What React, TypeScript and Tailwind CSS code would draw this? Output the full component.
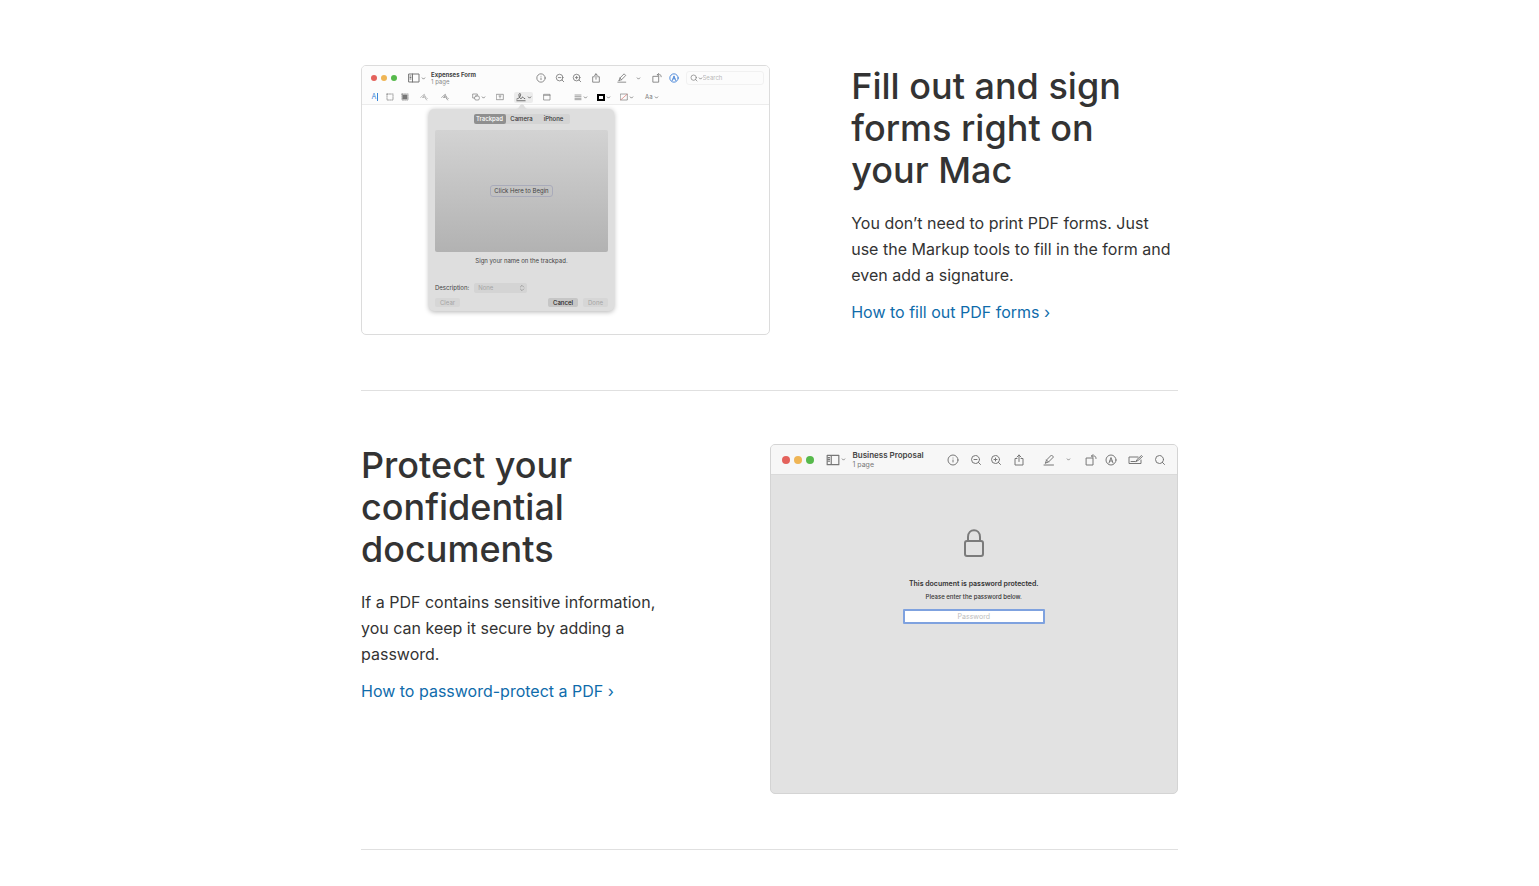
import React from 'react';
import { ChevronDown, ChevronsUpDown, Search, ZoomIn, ZoomOut, Info } from 'lucide-react';

interface IconProps {
  className?: string;
}

interface GlyphProps extends IconProps {
  children: React.ReactNode;
  viewBox?: string;
}

const Glyph: React.FC<GlyphProps> = ({ className, children, viewBox = '0 0 24 24' }) => (
  <svg
    viewBox={viewBox}
    fill="none"
    stroke="currentColor"
    strokeWidth="2"
    strokeLinecap="round"
    strokeLinejoin="round"
    className={className}
    aria-hidden="true"
  >
    {children}
  </svg>
);

const SidebarIcon: React.FC<IconProps> = ({ className }) => (
  <Glyph className={className}>
    <path d="M2 4h20v16H2zM9 4v16M4 8h2M4 11h2M4 14h2" />
  </Glyph>
);

const ShareIcon: React.FC<IconProps> = ({ className }) => (
  <Glyph className={className}>
    <path d="M8 9H4v13h16V9h-4M12 15V2M8 6l4-4 4 4" />
  </Glyph>
);

const PenIcon: React.FC<IconProps> = ({ className }) => (
  <Glyph className={className}>
    <path d="M5 18l2-6L17 2l4 4-10 10-6 2zM7 12l4 4M2 22h19" />
  </Glyph>
);

const RotateIcon: React.FC<IconProps> = ({ className }) => (
  <Glyph className={className}>
    <path d="M3 8h13v14H3zM13 4h5c3 0 4 2 4 5M16 1l-3 3 3 3" />
  </Glyph>
);

const MarkupIcon: React.FC<IconProps> = ({ className }) => (
  <Glyph className={className}>
    <circle cx="12" cy="12" r="10" />
    <path d="M8 18l4-11 4 11M10 14h4" />
  </Glyph>
);

const FormIcon: React.FC<IconProps> = ({ className }) => (
  <Glyph className={className} viewBox="0 0 30 20">
    <path d="M20 4H2v13h24v-7M6 13h8M16 13l2-4 9-8 2 2-9 8-4 2z" />
  </Glyph>
);

const SignatureIcon: React.FC<IconProps> = ({ className }) => (
  <Glyph className={className}>
    <path d="M2 17c5-1 9-6 9-11 0-4-4-3-4 1 0 5 3 9 5 9s2-4 4-4 1 4 5 4M2 21h20" />
  </Glyph>
);

const SketchIcon: React.FC<IconProps> = ({ className }) => (
  <Glyph className={className}>
    <path d="M2 13C7 9 11 5 13 4c2 0-3 7-5 11 4-5 7-7 8-6s-3 6-1 6M15 14l5 7M19 14l3 3" />
  </Glyph>
);

const Lights: React.FC<{ small?: boolean }> = ({ small }) => {
  const dot = small ? 'size-[6px] rounded-full' : 'size-2 rounded-full';
  return (
    <div className="flex gap-1">
      <span className={`${dot} bg-[#e4625c]`} />
      <span className={`${dot} bg-[#efb555]`} />
      <span className={`${dot} bg-[#56b94b]`} />
    </div>
  );
};

interface ToolProps {
  label: string;
  className?: string;
  children: React.ReactNode;
}

const Tool: React.FC<ToolProps> = ({ label, className = '', children }) => (
  <button type="button" aria-label={label} className={`flex shrink-0 items-center justify-center gap-px ${className}`}>
    {children}
  </button>
);

const Chevron: React.FC = () => <ChevronDown className="size-[5px] shrink-0" strokeWidth={4} />;

const FormWindow: React.FC = () => (
  <div className="overflow-hidden rounded-[5px] border border-[#dcdcdc] bg-white text-[#777]">
    <div className="flex h-6 items-center bg-[#fcfcfc] pr-[5px] pl-[9px]">
      <Lights small />
      <Tool label="Sidebar" className="ml-[11px]">
        <SidebarIcon className="size-3" />
        <Chevron />
      </Tool>
      <div className="ml-[5px] text-[6px] leading-[7px]">
        <p className="font-bold text-[#444]">Expenses Form</p>
        <p className="text-[#888]">1 page</p>
      </div>
      <Tool label="Info" className="ml-auto"><Info className="size-[10px]" /></Tool>
      <Tool label="Zoom out" className="ml-[9px]"><ZoomOut className="size-[10px]" /></Tool>
      <Tool label="Zoom in" className="ml-[7px]"><ZoomIn className="size-[10px]" /></Tool>
      <Tool label="Share" className="ml-[9px]"><ShareIcon className="size-[10px]" /></Tool>
      <Tool label="Highlight" className="ml-4"><PenIcon className="size-[10px]" /></Tool>
      <Tool label="Highlight colors" className="ml-[9px]"><Chevron /></Tool>
      <Tool label="Rotate" className="ml-[11px]"><RotateIcon className="size-[10px]" /></Tool>
      <Tool label="Markup" className="ml-[7px] text-[#3478d4]"><MarkupIcon className="size-[10px]" /></Tool>
      <label className="ml-[7px] flex h-[14px] w-[78px] items-center rounded-[3px] border border-[#f1f1f1] pl-[3px]">
        <Search className="size-2 shrink-0" />
        <Chevron />
        <input
          type="search"
          aria-label="Search"
          placeholder="Search"
          className="w-full min-w-0 text-[6px] leading-[8px] outline-none placeholder:text-[#b8b8b8]"
        />
      </label>
    </div>

    <div className="flex h-[15px] items-center border-b border-[#ececec] bg-[#fcfcfc] pl-2">
      <Tool label="Text selection" className="w-[10px] text-[7px] leading-[8px] text-[#3b86d8]">
        A<span className="h-2 w-px bg-[#3b86d8]" />
      </Tool>
      <Tool label="Rectangular selection" className="ml-[5px] w-[10px]">
        <Glyph className="size-2"><rect x="3" y="3" width="18" height="18" strokeDasharray="4 3" /></Glyph>
      </Tool>
      <Tool label="Redact" className="ml-[5px] w-[10px]">
        <Glyph className="size-2">
          <rect x="3" y="3" width="18" height="18" strokeDasharray="4 3" />
          <rect x="6" y="6" width="12" height="12" fill="currentColor" />
        </Glyph>
      </Tool>
      <Tool label="Sketch" className="ml-[9px] w-[10px] text-[#999]"><SketchIcon className="size-2" /></Tool>
      <Tool label="Draw" className="ml-[11px] w-[10px]"><SketchIcon className="size-2" /></Tool>
      <Tool label="Shapes" className="ml-[22px]">
        <Glyph className="size-2">
          <path d="M8 15H2V3h14v4" />
          <rect x="8" y="9" width="14" height="12" rx="4" />
        </Glyph>
        <Chevron />
      </Tool>
      <Tool label="Text" className="ml-[9px] w-[10px]">
        <Glyph className="size-2"><path d="M2 4h20v16H2zM9 9h6M12 9v6" /></Glyph>
      </Tool>
      <Tool label="Sign" className="ml-[9px] h-[11px] w-[19px] rounded-[2px] bg-[#ececec] text-[#555]">
        <SignatureIcon className="size-[10px]" />
        <Chevron />
      </Tool>
      <Tool label="Note" className="ml-[9px] w-[10px]">
        <Glyph className="size-2"><path d="M3 4h18v17H3zM3 7h18" /></Glyph>
      </Tool>
      <Tool label="Shape style" className="ml-[22px]">
        <Glyph className="size-2"><path d="M3 6h18M3 11h18M3 16h18M3 20h18" /></Glyph>
        <Chevron />
      </Tool>
      <Tool label="Border color" className="ml-[9px]">
        <span className="h-[7px] w-2 border-2 border-black" />
        <Chevron />
      </Tool>
      <Tool label="Fill color" className="ml-[9px]">
        <Glyph className="size-2">
          <rect x="2" y="3" width="20" height="18" />
          <path d="M3 20L21 4" stroke="#d9706a" />
        </Glyph>
        <Chevron />
      </Tool>
      <Tool label="Text style" className="ml-[11px] text-[6px] leading-[8px]">
        Aa
        <Chevron />
      </Tool>
    </div>

    {/* Signature popover */}
    <div className="relative mt-1 mb-[23px] ml-[67px] w-[185px] rounded-[5px] bg-[#dedede] px-[6px] pt-[5px] pb-1 text-[6px] leading-[8px] text-[#444] shadow-[0_1px_5px_rgba(0,0,0,0.3)]">
      <svg viewBox="0 0 12 5" className="absolute -top-[5px] left-[87px] h-[5px] w-3" aria-hidden="true">
        <path d="M0 5C3 5 4 0 6 0s3 5 6 5z" fill="#dedede" />
      </svg>
      <div className="mx-auto flex h-[10px] w-24 items-center rounded-[2px] bg-[#d4d4d4] font-medium text-[#333]">
        <button type="button" className="h-full w-8 rounded-[2px] bg-[#8f8f8f] text-white">Trackpad</button>
        <button type="button" className="h-full w-8">Camera</button>
        <button type="button" className="h-full w-8">iPhone</button>
      </div>
      <div className="mt-[6px] flex h-[122px] items-center justify-center rounded-[2px] bg-linear-to-b from-[#d3d3d3] to-[#b2b2b2]">
        <button type="button" className="h-3 rounded-[3px] border border-[#a9abba] px-[3px]">Click Here to Begin</button>
      </div>
      <p className="mt-[5px] text-center">Sign your name on the trackpad.</p>
      <div className="mt-[18px] flex h-[10px] items-center gap-[5px]">
        <label htmlFor="description">Description:</label>
        <div className="relative">
          <select
            id="description"
            disabled
            className="block h-[10px] w-[53px] appearance-none rounded-[2px] bg-[#d4d4d4] pl-1 text-[#a4a4a4]"
          >
            <option>None</option>
          </select>
          <ChevronsUpDown className="absolute top-px right-px size-2 text-[#888]" />
        </div>
      </div>
      <div className="mt-[5px] flex h-[9px] gap-[5px]">
        <button type="button" disabled className="mr-auto w-[25px] rounded-[2px] bg-[#d6d6d6] text-[#a4a4a4]">Clear</button>
        <button type="button" className="w-[30px] rounded-[2px] bg-[#c6c6c6] font-medium text-[#222]">Cancel</button>
        <button type="button" disabled className="w-[25px] rounded-[2px] bg-[#d6d6d6] text-[#a4a4a4]">Done</button>
      </div>
    </div>
  </div>
);

const PasswordWindow: React.FC = () => (
  <div className="overflow-hidden rounded-[5px] border border-[#d4d4d4] bg-[#e2e2e2] text-[#777]">
    <div className="flex h-[30px] items-center border-b border-[#dadada] bg-[#f7f7f7] px-[11px]">
      <Lights />
      <Tool label="Sidebar" className="ml-3">
        <SidebarIcon className="size-[14px]" />
        <Chevron />
      </Tool>
      <div className="ml-[7px] text-[7px] leading-[9px]">
        <p className="text-[8px] leading-[9px] font-semibold text-[#444]">Business Proposal</p>
        <p className="text-[#777]">1 page</p>
      </div>
      <Tool label="Info" className="ml-auto"><Info className="size-3" /></Tool>
      <Tool label="Zoom out" className="ml-[11px]"><ZoomOut className="size-3" /></Tool>
      <Tool label="Zoom in" className="ml-2"><ZoomIn className="size-3" /></Tool>
      <Tool label="Share" className="ml-[11px]"><ShareIcon className="size-3" /></Tool>
      <Tool label="Highlight" className="ml-[18px]"><PenIcon className="size-3" /></Tool>
      <Tool label="Highlight colors" className="ml-[11px]"><Chevron /></Tool>
      <Tool label="Rotate" className="ml-[14px]"><RotateIcon className="size-3" /></Tool>
      <Tool label="Markup" className="ml-2"><MarkupIcon className="size-3" /></Tool>
      <Tool label="Fill form" className="ml-[11px]"><FormIcon className="h-[10px] w-[15px]" /></Tool>
      <Tool label="Search" className="ml-[11px]"><Search className="size-3" /></Tool>
    </div>

    <div className="flex flex-col items-center pt-[54px] pb-[169px] text-[#333]">
      <svg viewBox="0 0 20 28" fill="none" stroke="#7b7b7b" strokeWidth="2" className="h-7 w-5" aria-hidden="true">
        <rect x="1" y="12" width="18" height="15" rx="2" />
        <path d="M4 12V8c0-9 12-9 12 0v4" />
      </svg>
      <p className="mt-[22px] text-[7px] leading-[10px] font-semibold">This document is password protected.</p>
      <p className="mt-1 text-[6px] leading-[8px] font-medium">Please enter the password below.</p>
      <input
        type="password"
        aria-label="Password"
        placeholder="Password"
        className="mt-2 h-[15px] w-[142px] rounded-[1px] border-2 border-[#7fa2df] bg-white text-center text-[7px] outline-none placeholder:text-[#bdbdbd]"
      />
    </div>
  </div>
);

interface FeatureProps {
  title: string;
  text: string;
  link: string;
  reverse?: boolean;
  children: React.ReactNode;
}

const Feature: React.FC<FeatureProps> = ({ title, text, link, reverse, children }) => (
  <section
    className={`flex items-start justify-between border-b border-[#e0e0e0] pt-[53px] pb-[55px] ${reverse ? 'flex-row-reverse' : ''}`}
  >
    <div className="w-1/2">{children}</div>
    <div className={reverse ? 'w-2/5 pr-5' : 'w-2/5'}>
      <h2 className="text-4xl leading-[42px] font-medium">{title}</h2>
      <p className="mt-[19px] text-base leading-[26px]">{text}</p>
      <a href="#" className="mt-[11px] inline-block text-base leading-[26px] text-[#0f6cab] hover:underline">
        {link} ›
      </a>
    </div>
  </section>
);

export default function App() {
  return (
    <main className="min-h-screen bg-white pt-3 font-['Inter',sans-serif] text-[#333]">
      <div className="mx-auto max-w-[817px]">
        <Feature
          title="Fill out and sign forms right on your Mac"
          text="You don’t need to print PDF forms. Just use the Markup tools to fill in the form and even add a signature."
          link="How to fill out PDF forms"
        >
          <FormWindow />
        </Feature>
        <Feature
          title="Protect your confidential documents"
          text="If a PDF contains sensitive information, you can keep it secure by adding a password."
          link="How to password-protect a PDF"
          reverse
        >
          <PasswordWindow />
        </Feature>
      </div>
    </main>
  );
}
